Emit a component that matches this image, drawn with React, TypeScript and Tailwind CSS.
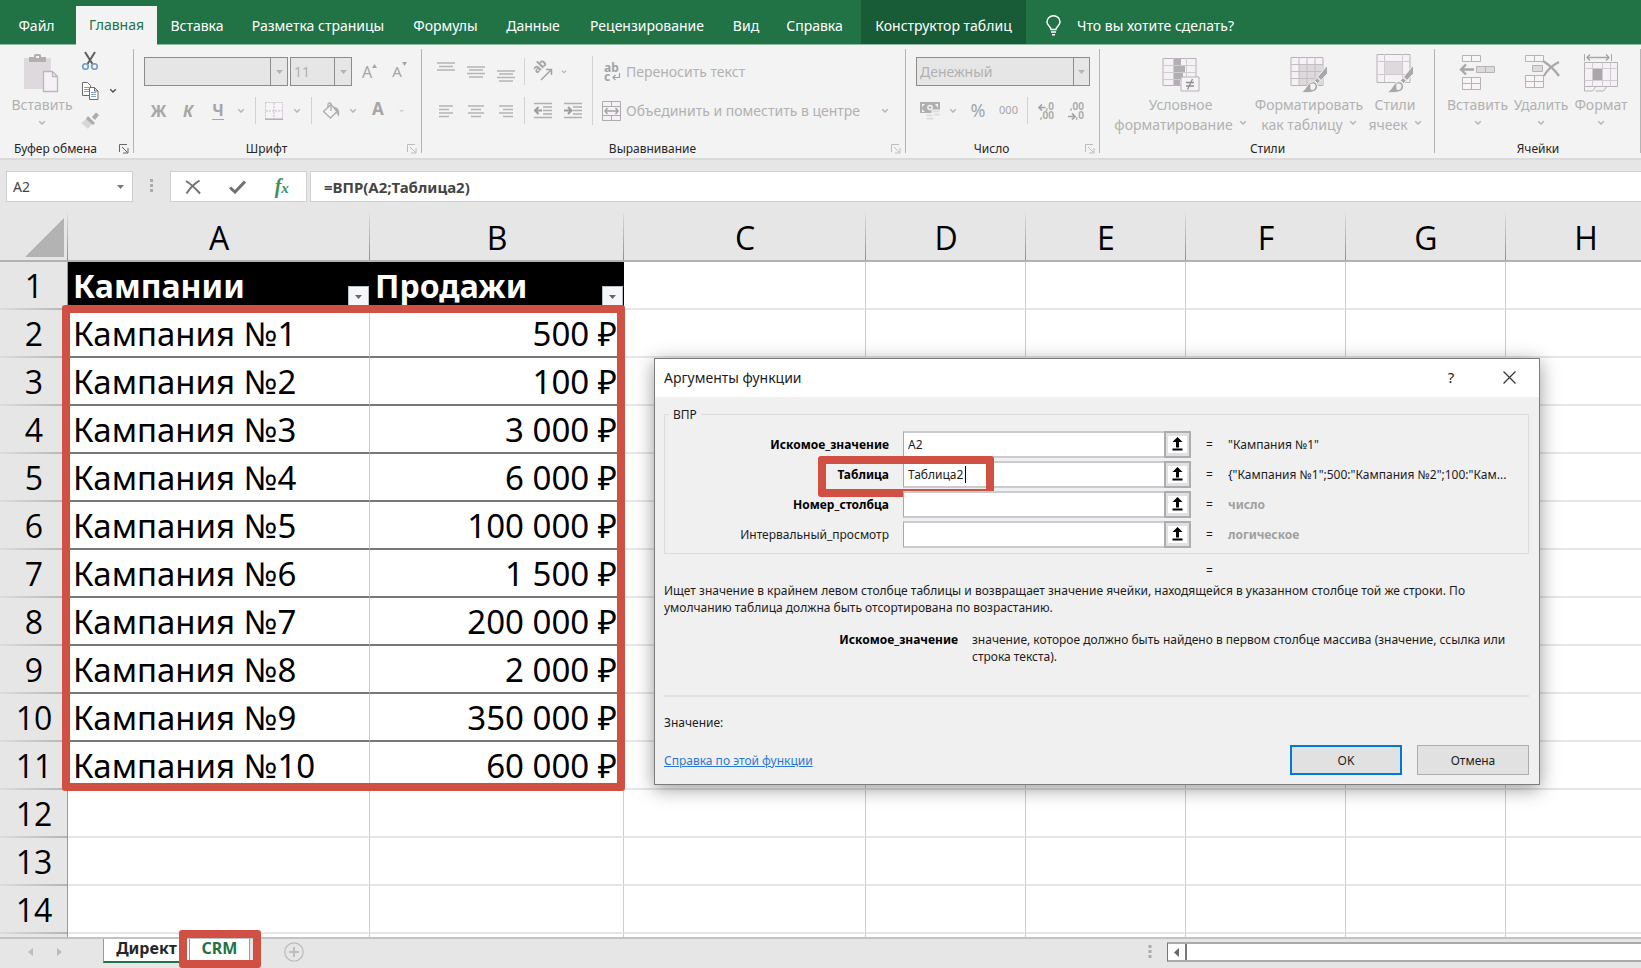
import { Fragment, type ReactNode } from "react";

const RIBBON_TABS = [
  { label: "Файл", box: "w-[73px] mr-[3px]" },
  { label: "Главная", box: "w-[81px]", active: true },
  { label: "Вставка", box: "w-[80px]" },
  { label: "Разметка страницы", box: "w-[162px]" },
  { label: "Формулы", box: "w-[93px]" },
  { label: "Данные", box: "w-[82px]" },
  { label: "Рецензирование", box: "w-[146px]" },
  { label: "Вид", box: "w-[52px]" },
  { label: "Справка", box: "w-[89px] pr-1" },
  { label: "Конструктор таблиц", box: "w-[165px]", context: true },
];

const COLUMNS = [
  { name: "A", col: "w-[302px]" },
  { name: "B", col: "w-[254px]" },
  { name: "C", col: "w-[242px]" },
  { name: "D", col: "w-[160px]" },
  { name: "E", col: "w-[160px]" },
  { name: "F", col: "w-[160px]" },
  { name: "G", col: "w-[160px]" },
  { name: "H", col: "w-[160px]" },
];

const SALES = ["500", "100", "3 000", "6 000", "100 000", "1 500", "200 000", "2 000", "350 000", "60 000"];

const ARGUMENTS = [
  { id: "lookup", label: "Искомое_значение", required: true, value: "A2", result: "\"Кампания №1\"" },
  { id: "table", label: "Таблица", required: true, value: "Таблица2", result: "{\"Кампания №1\";500:\"Кампания №2\";100:\"Кам..." },
  { id: "column", label: "Номер_столбца", required: true, value: "", result: "число", hint: true },
  { id: "range", label: "Интервальный_просмотр", required: false, value: "", result: "логическое", hint: true },
];

function Chevron({ dark = false }: { dark?: boolean }) {
  return (
    <svg className={dark ? "text-[#555]" : "text-[#b5b5b5]"} width="8" height="6" viewBox="0 0 8 6" fill="none" stroke="currentColor" strokeWidth="1.5">
      <path d="M1.2 1.2 4 4l2.8-2.8" />
    </svg>
  );
}

function Down({ className = "text-[#b5b5b5]" }: { className?: string }) {
  return (
    <svg className={className} width="7" height="4" viewBox="0 0 7 4" fill="currentColor">
      <path d="M0 0h7L3.5 4z" />
    </svg>
  );
}

function Slot({ w, label, children }: { w: string; label: string; children: ReactNode }) {
  return (
    <button type="button" aria-label={label} className={`flex h-full shrink-0 items-center justify-center ${w}`}>
      {children}
    </button>
  );
}

function Rule({ className = "h-[27px]" }: { className?: string }) {
  return <span className={`w-px shrink-0 bg-[#d2d2d2] ${className}`} />;
}

function Combo({ label, value, w, arrow }: { label: string; value: string; w: string; arrow: string }) {
  return (
    <div className={`relative h-[29px] shrink-0 border border-[#8c8c8c] bg-[#e6e6e6] ${w}`}>
      <select aria-label={label} defaultValue={value} className="h-full w-full appearance-none bg-transparent pl-[3px] text-[14px] text-[#b1b1b1] outline-none">
        <option value={value}>{value}</option>
      </select>
      <span className={`pointer-events-none absolute inset-y-0 right-0 flex items-center justify-center border-l border-[#8c8c8c] bg-[#e6e6e6] ${arrow}`}>
        <Down />
      </span>
    </div>
  );
}

function Group({ title, w, launcher, children }: { title: string; w: string; launcher?: "dark" | "light"; children: ReactNode }) {
  return (
    <section className={`relative flex h-[113px] shrink-0 flex-col ${w}`}>
      <div className="h-[95px]">{children}</div>
      <div className="flex h-[18px] items-center">
        <h2 className={`flex-1 text-center text-[12px] whitespace-nowrap text-[#262626] ${launcher ? "pr-2" : ""}`}>{title}</h2>
        {launcher && (
          <button type="button" aria-label={`${title}: параметры`} className={`mr-[5px] ${launcher === "dark" ? "text-[#666]" : "text-[#bdbdbd]"}`}>
            <svg width="10" height="10" viewBox="0 0 10 10" fill="none" stroke="currentColor">
              <path d="M.5 8V.5H8M3 3l5.5 5.5M9 4v5H4" />
            </svg>
          </button>
        )}
      </div>
      <span className="absolute top-1 right-0 h-[104px] w-px bg-[#b4b4b4]" />
    </section>
  );
}

function Lines({ rows }: { rows: number[][] }) {
  return (
    <svg width="20" height="20" viewBox="0 0 20 20" className="text-[#b5b5b5]" stroke="currentColor" strokeWidth="1.5">
      {rows.map(([y, x1, x2]) => (
        <path key={y} d={`M${x1} ${y}H${x2}`} />
      ))}
    </svg>
  );
}

function IndentIcon({ right = false }: { right?: boolean }) {
  return (
    <svg width="18" height="18" viewBox="0 0 18 18" fill="none" stroke="#b0b0b0" strokeWidth="1.5">
      <path d="M0 1.5h18M9 5h9M9 8.5h9M9 12h9M0 15.5h18" />
      <path stroke="#9c9c9c" strokeWidth="2" d={right ? "M0 8.5h7M4 5l3.5 3.5L4 12" : "M8 8.5H1M4.500 5 1 8.500 4.500 12"} />
    </svg>
  );
}

function Brush() {
  return (
    <g>
      <path fill="#a9a7a9" stroke="#f3f3f3" d="M37.500 12v8.500L31 27.500l-3.500-3.500z" />
      <path fill="#a9a7a9" stroke="#f3f3f3" d="M27 24.500l3.500 3.500-3 2.500-3-3z" />
      <path fill="#a9a7a9" stroke="#f3f3f3" d="M10 39.500c5-1 6-6 9-9 3-2.500 6-2 7.500 0s1.500 5-1 7-8 2.500-15.500 2z" />
      <path fill="#f3f3f3" d="M20 31c1 2.500-.5 4.500 1.500 6 2 .5 4-1.500 4-4 0-2-2.500-3.500-5.500-2z" />
    </g>
  );
}

function PasteIcon() {
  return (
    <svg width="38" height="40" viewBox="0 0 38 40">
      <path fill="#ddd9dd" d="M1 5h27v31H1z" />
      <path fill="#b1afb1" d="M6 9V4h5V2.500Q11 1 12.500 1h4Q18 1 18 2.500V4h5v5zM13 3v2h3V3z" />
      <path fill="#f6f1f6" stroke="#b9b7b9" strokeWidth="1.300" d="M20.500 18.500h9l5 5v15h-14zM29.500 18.500v5h5" />
    </svg>
  );
}

function CondIcon() {
  return (
    <svg width="38" height="40" viewBox="0 0 38 40" fill="none">
      <path fill="#f6f1f6" stroke="#b5b3b5" d="M1 5.500h33v27H1z" />
      <path stroke="#cfcbcf" d="M1 12.500h33M1 19.500h33M1 26.500h33M11.500 5v27M24.500 5v27" />
      <path fill="#b1afb1" d="M12 6h7v6h-7zM12 13h11v6H12zM12 20h9v6h-9zM12 27h6v5h-6z" />
      <path fill="#f6f3f6" stroke="#b5b3b5" d="M19 24h18v14H19z" />
      <path stroke="#8f8f8f" strokeWidth="1.300" d="M24 29.500h8M24 33h8M30.500 26l-5 10.500" />
    </svg>
  );
}

function FormatTableIcon() {
  return (
    <svg width="38" height="40" viewBox="0 0 38 40" fill="none">
      <path fill="#f6f1f6" stroke="#b5b3b5" d="M1 4.500h32v28H1z" />
      <path fill="#ddd9dd" d="M9 12h24v20H9z" />
      <path stroke="#c2bec2" d="M1 11.500h32M1 18.500h32M1 25.500h32M9 4v28M17 4v28M25 4v28" />
      <Brush />
    </svg>
  );
}

function CellStylesIcon() {
  return (
    <svg width="38" height="40" viewBox="0 0 38 40" fill="none">
      <path fill="#f6f1f6" stroke="#b5b3b5" d="M1 1.500h33v28H1z" />
      <path stroke="#cfcbcf" d="M1 8.500h33M1 21.500h33M8.500 1v28M26.500 1v28" />
      <path fill="#ddd9dd" stroke="#cfcbcf" d="M8.500 8.500h18v13h-18z" />
      <Brush />
    </svg>
  );
}

function InsertCellsIcon() {
  return (
    <svg width="38" height="40" viewBox="0 0 38 40" fill="none">
      <path fill="#f8f4f8" stroke="#b5b3b5" d="M3.500 2.500h18v6h-18zM12.500 2.500v6M3.500 24.500h18v12h-18zM3.500 30.500h18M12.500 24.500v12" />
      <path fill="#ddd9dd" stroke="#b5b3b5" d="M17.500 13.500h18v6h-18zM26.500 13.500v6" />
      <path stroke="#a9a7a9" strokeWidth="2.400" d="M15 16.500H2M7 11.500l-5 5 5 5" />
    </svg>
  );
}

function DeleteCellsIcon() {
  return (
    <svg width="38" height="40" viewBox="0 0 38 40" fill="none">
      <path fill="#f8f4f8" stroke="#b5b3b5" d="M3.500 2.500h18v6h-18zM12.500 2.500v6M3.500 22.500h18v12h-18zM3.500 28.500h18M12.500 22.500v12" />
      <path fill="#ddd9dd" stroke="#b5b3b5" d="M10.500 12.500h10v6h-10z" />
      <path stroke="#a9a7a9" strokeWidth="2.200" d="M21 8c5 3 11 8 16 15M37 9c-6 3-12 8-15 14" />
    </svg>
  );
}

function FormatCellsIcon() {
  return (
    <svg width="38" height="40" viewBox="0 0 38 40" fill="none">
      <path stroke="#a9a7a9" d="M2.500 1v7M29.500 1v7" />
      <path stroke="#a9a7a9" strokeWidth="1.500" d="M5 4.500h22M8 1.500l-3 3 3 3M24 1.500l3 3-3 3" />
      <path fill="#f6f1f6" stroke="#b5b3b5" d="M2.500 9.500h33v24h-33z" />
      <path stroke="#cfcbcf" d="M2.500 15.500h33M2.500 27.500h33M10.500 9.500v24M20.500 9.500v24M28.500 9.500v24" />
      <path fill="#a9a7a9" d="M11 16h9v11h-9z" />
      <path stroke="#b5b3b5" d="M2.500 34v4h8l3-4M13.500 38h8l3-4" />
    </svg>
  );
}

function BigButton({ w, icon, lines }: { w: string; icon: ReactNode; lines: string[] }) {
  return (
    <button type="button" className={`flex shrink-0 flex-col items-center pt-2 text-[14px] leading-5 whitespace-nowrap text-[#b1b1b1] ${w}`}>
      {icon}
      <span className="mt-0.5">{lines[0]}</span>
      <span className="flex h-5 items-center gap-1.5">
        {lines[1] && <span>{lines[1]}</span>}
        <span className="-mt-1">
          <Chevron />
        </span>
      </span>
    </button>
  );
}

function ClipboardGroup() {
  return (
    <Group title="Буфер обмена" w="w-[134px]" launcher="dark">
      <div className="flex">
        <BigButton w="w-[80px] pl-1" icon={<PasteIcon />} lines={["Вставить"]} />
        <div className="flex flex-col pt-px">
          <div className="h-[30px]">
            <Slot w="w-[19px]" label="Вырезать">
              <svg width="18" height="20" viewBox="0 0 18 20" fill="none">
                <path stroke="#5f5f5f" strokeWidth="2" d="M4 1l7.500 12M14 1L6.500 13" />
                <circle cx="4.500" cy="15.500" r="2.800" stroke="#6f9bc8" strokeWidth="1.600" />
                <circle cx="13.500" cy="15.500" r="2.800" stroke="#6f9bc8" strokeWidth="1.600" />
              </svg>
            </Slot>
          </div>
          <div className="flex h-[30px]">
            <Slot w="w-[19px]" label="Копировать">
              <svg width="18" height="20" viewBox="0 0 18 20" fill="none">
                <path fill="#fff" stroke="#6b6b6b" d="M1.500 1.500h5l3 3v10h-8z" />
                <path stroke="#7fa6d0" d="M3 6.500h5M3 8.500h5M3 10.500h5" />
                <path fill="#fff" stroke="#6b6b6b" d="M8.500 6.500h5l3.500 3.500v8.500H8.500zM13.500 6.500V10H17" />
                <path stroke="#7fa6d0" d="M10 11.500h5M10 13.500h5M10 15.500h5" />
              </svg>
            </Slot>
            <Slot w="w-[28px]" label="Варианты копирования">
              <Chevron dark />
            </Slot>
          </div>
          <div className="h-[30px]">
            <Slot w="w-[19px]" label="Формат по образцу">
              <svg width="18" height="18" viewBox="0 0 18 18">
                <path fill="#d9d5d9" d="M7 6l5 5-5 6L0 11z" />
                <path fill="#adabad" d="M7 4l7 7-2 2-7-6zM11 5l4-4.500 3 2.500-4 5z" />
              </svg>
            </Slot>
          </div>
        </div>
      </div>
    </Group>
  );
}

function FontGroup() {
  return (
    <Group title="Шрифт" w="w-[288px]" launcher="light">
      <div className="flex flex-col gap-0.5 pt-2 pl-2.5 text-[#a6a6a6]">
        <div className="flex h-[37px] items-center">
          <Combo label="Шрифт" value="" w="w-[144px]" arrow="w-[17px]" />
          <span className="w-0.5" />
          <Combo label="Размер" value="11" w="w-[62px]" arrow="w-[17px]" />
          <Slot w="w-[35px]" label="Увеличить размер шрифта">
            <span className="flex text-[16px]">
              A
              <svg width="5" height="4" viewBox="0 0 5 4" fill="currentColor" className="mt-1">
                <path d="M0 4h5L2.500 0z" />
              </svg>
            </span>
          </Slot>
          <Slot w="w-[25px]" label="Уменьшить размер шрифта">
            <span className="flex text-[15px]">
              A
              <svg width="5" height="4" viewBox="0 0 5 4" fill="currentColor" className="mt-0.5">
                <path d="M0 0h5L2.500 4z" />
              </svg>
            </span>
          </Slot>
        </div>
        <div className="flex h-[37px] items-center text-[16px] font-bold">
          <Slot w="w-[29px]" label="Полужирный">Ж</Slot>
          <Slot w="w-[30px]" label="Курсив">
            <span className="italic">К</span>
          </Slot>
          <Slot w="w-[30px]" label="Подчёркнутый">
            <span className="border-b border-current leading-[18px]">Ч</span>
          </Slot>
          <Slot w="w-[15px]" label="Варианты подчёркивания">
            <Chevron />
          </Slot>
          <span className="w-[7px]" />
          <Rule />
          <Slot w="w-[36px]" label="Границы">
            <svg width="18" height="18" viewBox="0 0 18 18" fill="none">
              <path fill="#f8f3f8" stroke="#cbc7cb" strokeDasharray="2 1" d="M.5.500h17v17H.5z" />
              <path stroke="#c2bec2" strokeDasharray="2 1" d="M9 1v16M1 9h16" />
              <path stroke="#b0aeb0" strokeWidth="1.500" d="M0 17.200h18" />
            </svg>
          </Slot>
          <Slot w="w-[10px]" label="Варианты границ">
            <Chevron />
          </Slot>
          <span className="w-[9px]" />
          <Rule />
          <Slot w="w-[37px]" label="Цвет заливки">
            <svg width="18" height="18" viewBox="0 0 18 18" fill="none" stroke="#aeacae" strokeWidth="1.300">
              <path fill="#f8f3f8" d="M1.500 9.500l7.500-7 6 7-6.500 6.500z" />
              <path d="M6 6V2.500Q6 1 7.500 1T9 2.500V9" />
              <path fill="#aeacae" d="M13 5.500c3 1 4 3.500 3.500 7.500-1.500-2-2-4-3.500-7.500z" />
            </svg>
          </Slot>
          <Slot w="w-[8px]" label="Варианты заливки">
            <Chevron />
          </Slot>
          <Slot w="w-[42px]" label="Цвет текста">
            <span className="-mt-1 text-[17px]">A</span>
          </Slot>
          <Slot w="w-[5px]" label="Варианты цвета текста">
            <Chevron />
          </Slot>
        </div>
      </div>
    </Group>
  );
}

function AlignGroup() {
  return (
    <Group title="Выравнивание" w="w-[484px]" launcher="light">
      <div className="flex text-[14px] text-[#b1b1b1]">
        <div className="flex flex-col gap-0.5 pt-2 pl-[9px]">
          <div className="flex h-[37px] items-center">
            <Slot w="w-[30px]" label="По верхнему краю">
              <Lines rows={[[1, 1, 19], [4.5, 3, 17], [8, 1, 19]]} />
            </Slot>
            <Slot w="w-[30px]" label="По середине">
              <Lines rows={[[5, 1, 19], [8, 3, 17], [11.5, 1, 19], [15, 3, 17]]} />
            </Slot>
            <Slot w="w-[30px]" label="По нижнему краю">
              <Lines rows={[[9, 1, 19], [12, 3, 17], [15.5, 1, 19], [19, 3, 17]]} />
            </Slot>
            <span className="w-[3px]" />
            <Rule />
            <Slot w="w-[36px]" label="Ориентация">
              <span className="relative flex h-5 w-5">
                <span className="absolute -top-1 -left-px -rotate-45 text-[12px] leading-4 font-bold text-[#a3a3a3]">ab</span>
                <svg width="20" height="20" viewBox="0 0 20 20" fill="none" stroke="#a3a3a3" strokeWidth="1.500">
                  <path d="M8 18L18 8M13 7.500h5.500V13" />
                </svg>
              </span>
            </Slot>
            <Slot w="w-[6px]" label="Варианты ориентации">
              <Chevron />
            </Slot>
          </div>
          <div className="flex h-[37px] items-center">
            <Slot w="w-[30px]" label="По левому краю">
              <Lines rows={[[5, 3, 17], [8.5, 3, 13], [12, 3, 17], [15.5, 3, 13]]} />
            </Slot>
            <Slot w="w-[30px]" label="По центру">
              <Lines rows={[[5, 2, 18], [8.5, 5, 15], [12, 2, 18], [15.5, 5, 15]]} />
            </Slot>
            <Slot w="w-[30px]" label="По правому краю">
              <Lines rows={[[5, 3, 17], [8.5, 7, 17], [12, 3, 17], [15.5, 7, 17]]} />
            </Slot>
            <span className="w-[3px]" />
            <Rule />
            <Slot w="w-[36px]" label="Уменьшить отступ">
              <IndentIcon />
            </Slot>
            <Slot w="w-[24px]" label="Увеличить отступ">
              <IndentIcon right />
            </Slot>
          </div>
        </div>
        <Rule className="mt-[11px] ml-[7px] h-[69px]" />
        <div className="flex flex-col gap-0.5 pt-2 pl-[9px]">
          <button type="button" className="flex h-[37px] items-center gap-[5px] whitespace-nowrap">
            <span className="relative block w-[19px] pl-0.5 text-left text-[12px] leading-[9px] font-bold text-[#a3a3a3]">
              ab
              <br />c
              <svg width="9" height="8" viewBox="0 0 9 8" fill="none" stroke="currentColor" strokeWidth="1.200" className="absolute right-0 bottom-0">
                <path d="M7.500 0v4.500H1M3.500 2L1 4.500 3.500 7" />
              </svg>
            </span>
            Переносить текст
          </button>
          <div className="flex h-[37px] items-center">
            <button type="button" className="flex w-[277px] items-center gap-[5px] whitespace-nowrap">
              <svg width="19" height="20" viewBox="0 0 19 20" fill="none">
                <path fill="#f6f1f6" stroke="#aeaaae" d="M.5.500h18v19H.5zM.5 5.500h18M.5 14.500h18M9.500.500v5M9.500 14.500v5" />
                <path stroke="#a3a3a3" strokeWidth="1.500" d="M3 10h13M5.500 7L3 10l2.500 3M13.500 7l2.500 3-2.500 3" />
              </svg>
              Объединить и поместить в центре
            </button>
            <Slot w="w-[12px]" label="Варианты объединения">
              <Chevron />
            </Slot>
          </div>
        </div>
      </div>
    </Group>
  );
}

function NumberGroup() {
  return (
    <Group title="Число" w="w-[194px]" launcher="light">
      <div className="flex flex-col gap-0.5 pt-2 pl-2.5 text-[#a6a6a6]">
        <div className="flex h-[37px] items-center">
          <Combo label="Числовой формат" value="Денежный" w="w-[174px]" arrow="w-[16px]" />
        </div>
        <div className="flex h-[37px] items-center">
          <Slot w="w-[28px]" label="Финансовый формат">
            <svg width="20" height="20" viewBox="0 0 20 20">
              <path fill="#b1afb1" d="M0 1h20v11H0z" />
              <path fill="#f3f3f3" d="M2 3h3L2 6zM18 3v4l-3-4zM2 8l3 3H2z" />
              <circle cx="10" cy="6.500" r="2.800" fill="#f3f3f3" />
              <circle cx="10" cy="6.500" r="1.300" fill="#b1afb1" />
              <path fill="#ddd9dd" stroke="#f3f3f3" d="M12 9h8v3h-8zM12 12h8v3h-8zM6 13h8v3H6zM6 16h8v3H6z" />
            </svg>
          </Slot>
          <Slot w="w-[18px]" label="Варианты финансового формата">
            <Chevron />
          </Slot>
          <Slot w="w-[32px]" label="Процентный формат">
            <span className="text-[18px]">%</span>
          </Slot>
          <Slot w="w-[29px]" label="Формат с разделителями">
            <span className="text-[11px]">000</span>
          </Slot>
          <span className="w-[4px]" />
          <Rule />
          <Slot w="w-[36px]" label="Увеличить разрядность">
            <span className="relative block w-4 text-right text-[10px] leading-[9px] font-semibold">
              ,0
              <br />
              ,00
              <svg width="8" height="7" viewBox="0 0 8 7" className="absolute top-0.5 left-0" fill="none" stroke="#a3a3a3" strokeWidth="1.700">
                <path d="M7.500 3.500H1M4 .5l-3 3 3 3" />
              </svg>
            </span>
          </Slot>
          <Slot w="w-[24px]" label="Уменьшить разрядность">
            <span className="relative block w-4 text-right text-[10px] leading-[9px] font-semibold">
              ,00
              <br />
              ,0
              <svg width="8" height="7" viewBox="0 0 8 7" className="absolute bottom-0 left-0" fill="none" stroke="#a3a3a3" strokeWidth="1.700">
                <path d="M0 3.500h6.500M4 .5l3 3-3 3" />
              </svg>
            </span>
          </Slot>
        </div>
      </div>
    </Group>
  );
}

function Ribbon() {
  return (
    <div className="flex h-[115px] shrink-0 overflow-hidden border-b-2 border-[#dadada] bg-[#f3f3f3]">
      <ClipboardGroup />
      <FontGroup />
      <AlignGroup />
      <NumberGroup />
      <Group title="Стили" w="w-[335px]">
        <div className="flex">
          <BigButton w="w-[153px] pl-2" icon={<CondIcon />} lines={["Условное", "форматирование"]} />
          <BigButton w="w-[112px]" icon={<FormatTableIcon />} lines={["Форматировать", "как таблицу"]} />
          <BigButton w="w-[60px]" icon={<CellStylesIcon />} lines={["Стили", "ячеек"]} />
        </div>
      </Group>
      <Group title="Ячейки" w="w-[206px]">
        <div className="flex pl-2.5">
          <BigButton w="w-[65px]" icon={<InsertCellsIcon />} lines={["Вставить"]} />
          <BigButton w="w-[62px]" icon={<DeleteCellsIcon />} lines={["Удалить"]} />
          <BigButton w="w-[58px]" icon={<FormatCellsIcon />} lines={["Формат"]} />
        </div>
      </Group>
    </div>
  );
}

function TabStrip() {
  return (
    <nav className="flex h-[45px] shrink-0 border-b border-[#8fb9a1] bg-[#217346] text-[14px] whitespace-nowrap text-white">
      {RIBBON_TABS.map((tab) => (
        <button
          key={tab.label}
          type="button"
          className={`flex shrink-0 items-center justify-center ${tab.box} ${
            tab.active ? "-mb-px mt-1.5 bg-[#f3f3f3] pb-0.5 text-[#217346]" : tab.context ? "bg-[#185c37] pt-1.5" : "pt-1.5"
          }`}
        >
          {tab.label}
        </button>
      ))}
      <button type="button" className="flex items-center gap-4 pt-1.5 pl-5">
        <svg width="15" height="21" viewBox="0 0 15 21" fill="none" stroke="#fff" strokeWidth="1.500">
          <path d="M5 14.500c0-3-4-3.500-4-7.500a6.500 6.300 0 0 1 13 0c0 4-4 4.500-4 7.500zM5 17h5M6 19.700h3" />
        </svg>
        Что вы хотите сделать?
      </button>
    </nav>
  );
}

function FormulaBar() {
  return (
    <div className="flex h-[53px] shrink-0 items-start pt-[11px] pl-1.5 text-[14px] text-[#444]">
      <div className="flex h-[31px] w-[127px] shrink-0 items-center border border-[#cfcfcf] bg-white pr-2 pl-1.5">
        <input aria-label="Имя ячейки" defaultValue="A2" className="w-full min-w-0 bg-transparent outline-none" />
        <Down className="shrink-0 text-[#777]" />
      </div>
      <svg width="37" height="31" viewBox="0 0 37 31" fill="#ababab" className="shrink-0">
        <path d="M17 8h3v3h-3zM17 13h3v3h-3zM17 18h3v3h-3z" />
      </svg>
      <div className="flex h-[31px] w-[137px] shrink-0 items-center justify-around border border-[#cfcfcf] bg-white pr-[3px]">
        <button type="button" aria-label="Отмена ввода">
          <svg width="16" height="16" viewBox="0 0 16 16" fill="none" stroke="#707070" strokeWidth="2">
            <path d="M1 2c5 3 9 7 14 12.500M14.500 1.500C9 5 5 9 1.500 14.500" />
          </svg>
        </button>
        <button type="button" aria-label="Ввод">
          <svg width="17" height="14" viewBox="0 0 17 14" fill="none" stroke="#707070" strokeWidth="3">
            <path d="M1 7.500l5 4.500L16 1.500" />
          </svg>
        </button>
        <button type="button" aria-label="Вставить функцию" className="font-['Liberation_Serif',serif] text-[20px] leading-5 font-bold text-[#3d8f63] italic">
          f<span className="text-[15px]">x</span>
        </button>
      </div>
      <input
        aria-label="Строка формул"
        defaultValue="=ВПР(A2;Таблица2)"
        className="ml-[3px] h-[31px] min-w-0 flex-1 border border-r-0 border-[#cfcfcf] bg-white pl-[13px] text-[15px] font-bold text-[#444] outline-none"
      />
    </div>
  );
}

function FilterHead({ children }: { children: ReactNode }) {
  return (
    <td className="h-12 bg-black p-0 text-[32px] font-bold text-white">
      <div className="flex h-12 items-center justify-between pr-px pl-[5px]">
        <span>{children}</span>
        <button type="button" aria-label="Фильтр" className="mb-0.5 flex h-[22px] w-[21px] items-center justify-center self-end border border-[#b9bdc4] bg-[#f4f6fa]">
          <Down className="text-[#666]" />
        </button>
      </div>
    </td>
  );
}

function RowHeader({ n }: { n: number }) {
  return (
    <th
      scope="row"
      className="h-12 border-r border-[#9b9b9b] bg-[#e6e6e6] bg-[linear-gradient(to_right,#dcdcdc,#b5b5b5)] bg-[length:100%_2px] bg-bottom bg-no-repeat p-0 pl-px font-['Open_Sans','Noto_Sans',sans-serif] text-[32px] font-normal"
    >
      {n}
    </th>
  );
}

const CELL = "h-12 border-r border-b-2 border-r-[#cdcdcd] border-b-[#e6e6e6] p-0";

function Sheet() {
  return (
    <table className="w-[1666px] table-fixed border-separate border-spacing-0 text-[33px] leading-10 whitespace-nowrap text-black">
      <colgroup>
        <col className="w-[68px]" />
        {COLUMNS.map((c) => (
          <col key={c.name} className={c.col} />
        ))}
      </colgroup>
      <thead>
        <tr>
          <td className="h-[49px] border-b-2 border-[#b2b2b2] bg-[#e6e6e6] bg-[linear-gradient(to_bottom,#dcdcdc,#8f8f8f)] bg-[length:1px_100%] bg-right bg-no-repeat p-0">
            <svg width="68" height="47" viewBox="0 0 68 47" className="block">
              <path fill="#b3b3b3" d="M64 5v39H25z" />
            </svg>
          </td>
          {COLUMNS.map((c) => (
            <th
              key={c.name}
              scope="col"
              className="h-[49px] border-b-2 border-[#b2b2b2] bg-[#e6e6e6] bg-[linear-gradient(to_bottom,#dcdcdc,#8f8f8f)] bg-[length:1px_100%] bg-right bg-no-repeat p-0 pt-0.5 font-['Open_Sans','Noto_Sans',sans-serif] text-[32px] font-normal"
            >
              {c.name}
            </th>
          ))}
        </tr>
      </thead>
      <tbody>
        <tr>
          <RowHeader n={1} />
          <FilterHead>Кампании</FilterHead>
          <FilterHead>Продажи</FilterHead>
          {COLUMNS.slice(2).map((c) => (
            <td key={c.name} className={CELL} />
          ))}
        </tr>
        {SALES.map((amount, i) => (
          <tr key={i}>
            <RowHeader n={i + 2} />
            <td className="h-12 border-r border-b-2 border-r-[#cdcdcd] border-b-[#777] p-0 pt-0.5 pl-[5px]">Кампания №{i + 1}</td>
            <td className="h-12 border-r border-b-2 border-r-[#cdcdcd] border-b-[#777] p-0 pt-0.5 pr-[6px] text-right">{amount} ₽</td>
            {COLUMNS.slice(2).map((c) => (
              <td key={c.name} className={CELL} />
            ))}
          </tr>
        ))}
        {[12, 13, 14, 15].map((n) => (
          <tr key={n}>
            <RowHeader n={n} />
            {COLUMNS.map((c) => (
              <td key={c.name} className={CELL} />
            ))}
          </tr>
        ))}
      </tbody>
    </table>
  );
}

function FunctionDialog() {
  return (
    <div role="dialog" aria-label="Аргументы функции" className="absolute top-[145px] left-[654px] w-[886px] border border-[#7d7d7d] bg-[#f0f0f0] text-[12px] leading-[17px] text-[#1c1c1c] shadow-[0_4px_18px_rgba(0,0,0,0.4)]">
      <header className="flex h-[38px] items-center bg-white pb-0.5 pl-[9px]">
        <h1 className="flex-1 text-[14px]">Аргументы функции</h1>
        <button type="button" className="w-[56px] text-[15px]">?</button>
        <button type="button" aria-label="Закрыть" className="flex w-[60px] justify-center">
          <svg width="13" height="13" viewBox="0 0 13 13" fill="none" stroke="#333" strokeWidth="1.200">
            <path d="M.5.500l12 12M12.500.500l-12 12" />
          </svg>
        </button>
      </header>
      <div className="pt-[9px] pr-2.5 pb-[9px] pl-[9px]">
        <fieldset className="h-[148px] border border-[#dcdcdc]">
          <legend className="ml-1 px-1">ВПР</legend>
          <div className="grid grid-cols-[224px_302px_37px_1fr] gap-y-[3px] pt-2">
            {ARGUMENTS.map((arg) => (
              <Fragment key={arg.id}>
                <label htmlFor={arg.id} className={`self-center text-right ${arg.required ? "font-bold text-black" : ""}`}>
                  {arg.label}
                </label>
                <div className="relative ml-[14px] flex h-[27px]">
                  <input
                    id={arg.id}
                    defaultValue={arg.value}
                    className="min-w-0 flex-1 border-2 border-r-0 border-l border-[#cbcbcf] border-l-[#a9a9ad] bg-white pl-1 outline-none"
                  />
                  <button type="button" aria-label={`Свернуть: ${arg.label}`} className="flex w-[27px] items-center justify-center border-2 border-[#adadb1] bg-[#e1e1e1]">
                    <svg width="19" height="17" viewBox="0 0 19 17">
                      <path fill="#fff" d="M0 0h19v17H0z" />
                      <path d="M9.500 1l5 5H11v5.500H8V6H4.500zM4.500 12.500h10v2h-10z" />
                    </svg>
                  </button>
                  {arg.id === "table" && (
                    <>
                      <span className="absolute top-[5px] left-[62px] h-[17px] w-px bg-black" />
                      <span className="pointer-events-none absolute top-[-5px] -left-[85px] h-[41px] w-[176px] rounded-[3px] border-8 border-[#d05044]" />
                    </>
                  )}
                </div>
                <span className="self-center text-center">=</span>
                <span className={`self-center whitespace-nowrap ${arg.hint ? "font-bold text-[#a0a0a0]" : ""}`}>{arg.result}</span>
              </Fragment>
            ))}
          </div>
        </fieldset>
        <div className="grid grid-cols-[527px_37px] pt-2">
          <span className="col-start-2 text-center">=</span>
        </div>
        <p className="pt-[3px]">
          <span className="block whitespace-nowrap">Ищет значение в крайнем левом столбце таблицы и возвращает значение ячейки, находящейся в указанном столбце той же строки. По</span>
          <span className="block">умолчанию таблица должна быть отсортирована по возрастанию.</span>
        </p>
        <div className="mt-[15px] grid h-[66px] grid-cols-[294px_1fr] gap-x-[14px] border-b-2 border-[#e1e1e1]">
          <b className="text-right text-black">Искомое_значение</b>
          <p>
            <span className="block whitespace-nowrap">значение, которое должно быть найдено в первом столбце массива (значение, ссылка или</span>
            <span className="block">строка текста).</span>
          </p>
        </div>
        <p className="pt-[17px]">Значение:</p>
        <div className="mt-[14px] flex h-[30px] items-center gap-[15px]">
          <a href="#help" className="flex-1 text-[#2b78d4] underline">Справка по этой функции</a>
          <button type="button" className="h-[30px] w-[112px] border-2 border-[#0078d7] bg-[#e1e1e1]">OK</button>
          <button type="button" className="h-[30px] w-[112px] border border-[#adadad] bg-[#e1e1e1]">Отмена</button>
        </div>
      </div>
    </div>
  );
}

function SheetTabs() {
  return (
    <footer className="relative flex h-[31px] shrink-0 items-start border-t-2 border-[#c3c3c3] bg-[#e6e6e6] text-[16px] leading-[18px] font-bold">
      <div className="flex h-[26px] w-[103px] shrink-0 items-center gap-6 pl-7">
        <button type="button" aria-label="Предыдущий лист">
          <svg width="5" height="8" viewBox="0 0 5 8" fill="#bdbdbd" className="block"><path d="M5 0v8L0 4z" /></svg>
        </button>
        <button type="button" aria-label="Следующий лист">
          <svg width="5" height="8" viewBox="0 0 5 8" fill="#bdbdbd" className="block"><path d="M0 0v8l5-4z" /></svg>
        </button>
      </div>
      <button type="button" className="h-6 w-[86px] shrink-0 border-b-2 border-l border-b-[#217346] border-l-[#999] bg-white pr-1 pb-1 pl-1 text-[#262626]">Директ</button>
      <div className="relative">
        <button type="button" className="h-6 w-[61px] border-x border-[#999] bg-white pb-1.5 text-[#217346]">CRM</button>
        <span className="pointer-events-none absolute -top-[9px] -left-[10px] h-[38px] w-[82px] rounded-[3px] border-8 border-[#d05044]" />
      </div>
      <button type="button" aria-label="Новый лист" className="mt-[3px] ml-[34px]">
        <svg width="20" height="20" viewBox="0 0 20 20" fill="none" stroke="#bdbdbd" strokeWidth="1.300" className="block">
          <circle cx="10" cy="10" r="9.200" />
          <path strokeWidth="2" d="M10 5v10M5 10h10" />
        </svg>
      </button>
      <span className="flex-1" />
      <svg width="4" height="16" viewBox="0 0 4 16" fill="#ababab" className="mt-1.5 mr-[15px]">
        <path d="M.5 0h3v3h-3zM.5 5h3v3h-3zM.5 10h3v3h-3z" />
      </svg>
      <div className="mt-[3px] flex h-5 w-[474px] border-y-2 border-l border-[#aaa] border-l-[#777] bg-white">
        <button type="button" aria-label="Прокрутить влево" className="flex w-[19px] items-center justify-center border-r-2 border-[#777]">
          <svg width="5" height="9" viewBox="0 0 5 9" fill="#666"><path d="M5 0v9L0 4.500z" /></svg>
        </button>
      </div>
    </footer>
  );
}

export default function App() {
  return (
    <div className="flex h-screen flex-col overflow-hidden bg-[#e6e6e6] font-['Noto_Sans',sans-serif]">
      <TabStrip />
      <Ribbon />
      <FormulaBar />
      <main className="relative min-h-0 flex-1 overflow-hidden bg-white">
        <Sheet />
        <span className="pointer-events-none absolute top-[92px] left-[62px] h-[486px] w-[563px] rounded-[3px] border-8 border-[#d05044]" />
        <FunctionDialog />
      </main>
      <SheetTabs />
    </div>
  );
}
